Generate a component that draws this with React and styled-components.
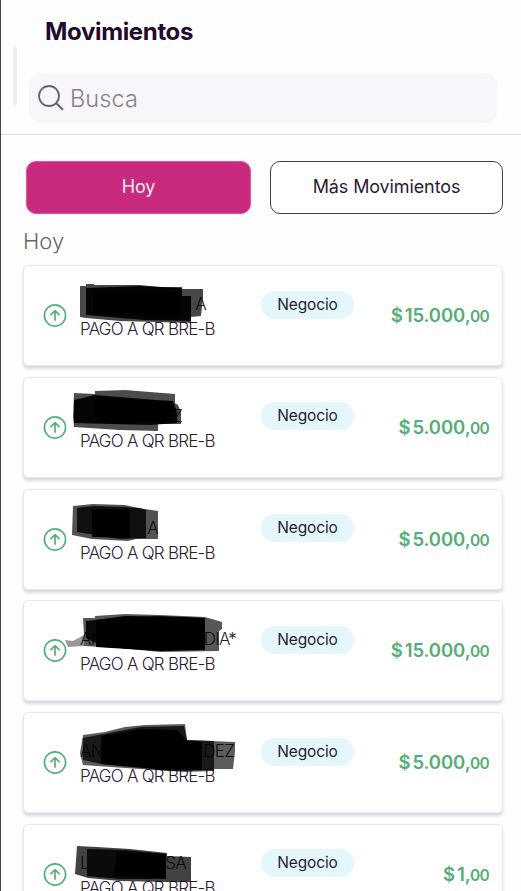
import React from "react"
import styled, { createGlobalStyle } from "styled-components"

const GlobalStyle = createGlobalStyle`
  * { box-sizing: border-box; }

  body {
    margin: 0;
    height: 891px;
    overflow: hidden;
    background-color: #fff;
    font-family: "Inter", "Liberation Sans", sans-serif;
    color: #2b1a33;
  }
`

const StyledPage = styled.div`
  position: relative;
  height: 891px;
  overflow: hidden;
  border-left: 1px solid #48464a;
  background-color: #fefefe;
`

const StyledEdgeMark = styled.span`
  position: absolute;
  left: -1px;
  top: 471px;
  width: 1px;
  height: 6px;
  background-color: #000;
`

const StyledThumb = styled.span`
  position: absolute;
  left: 12px;
  top: 47px;
  width: 4px;
  height: 58px;
  border-radius: 2px;
  background-color: #eeeeef;
`

const StyledHeader = styled.header`
  height: 135px;
  padding: 17px 24px 0 28px;
  border-bottom: 1px solid #e3e1e6;
`

const StyledTitle = styled.h1`
  margin: 0 0 27px 16px;
  font-size: 24px;
  line-height: 29px;
  font-weight: 650;
  letter-spacing: -0.35px;
  color: #240a2c;
`

const StyledSearch = styled.div`
  display: flex;
  align-items: center;
  gap: 5px;
  height: 50px;
  padding-left: 8px;
  border-radius: 12px;
  background-color: #f8f6fb;
  font-size: 23.5px;
  font-weight: 300;
  letter-spacing: 0.1px;
  color: #87818b;
`

const StyledTabs = styled.div`
  display: flex;
  gap: 19px;
  padding: 26px 18px 0 25px;
`

const StyledTab = styled.button`
  width: ${ ({ $selected }) => $selected ? "225px" : "233px" };
  height: 52.5px;
  padding: 0 0 1px;
  border: ${ ({ $selected }) => $selected ? "1px solid #d65b9c" : "1.5px solid #4a3b50" };
  border-radius: 10px;
  background-color: ${ ({ $selected }) => $selected ? "#c82a7e" : "#fff" };
  ${ ({ $selected }) => $selected && "box-shadow: 0 0 3px #e3dfe6;" }
  color: ${ ({ $selected }) => $selected ? "#fbeaf4" : "#2b1a33" };
  font-family: inherit;
  font-size: 18px;
  letter-spacing: -0.12px;
`

const StyledDay = styled.h2`
  margin: 13px 0 9.5px 22px;
  font-size: 22px;
  line-height: 29px;
  font-weight: 350;
  color: #69666b;
`

const StyledList = styled.div`
  display: grid;
  row-gap: 10.8px;
  padding: 0 18px 0 22px;
`

const StyledCard = styled.div`
  position: relative;
  display: grid;
  grid-template-columns: 56px 181px 93px 1fr;
  height: 101px;
  padding-right: 13px;
  border: 1px solid #e9e7ef;
  border-radius: 5px;
  background-color: #fff;
  box-shadow: 0 3px 3px #dcd8e0;
`

const StyledArrow = styled.svg`
  margin: 37px 0 0 19px;
`

const StyledDetail = styled.div`
  padding-top: 26px;
  font-size: 17px;
  line-height: 25px;
  font-weight: 300;
  letter-spacing: -0.75px;
  white-space: nowrap;
`

const StyledName = styled.div`
  display: flex;
  justify-content: space-between;
  width: ${ ({ width }) => width }px;
  height: 25px;
`

const StyledInk = styled.svg`
  position: absolute;
  left: 37px;
  top: 0;
  pointer-events: none;
`

const StyledBadge = styled.div`
  height: 28px;
  margin-top: 24.5px;
  border-radius: 14px;
  background-color: #e3f7fd;
  font-size: 15.5px;
  line-height: 27px;
  letter-spacing: -0.15px;
  text-align: center;
`

const StyledAmount = styled.div`
  padding-top: 37px;
  text-align: right;
  white-space: nowrap;
  font-size: 18.5px;
  line-height: 25px;
  font-weight: 600;
  letter-spacing: -0.1px;
  word-spacing: -2.6px;
  color: #55ae76;

  small {
    margin-left: -0.5px;
    font-size: 15.5px;
    letter-spacing: -0.7px;
  }
`

// ink points are relative to x = 60 of the page and the top of each card
const movements = [
  {
    start: "", end: "A", width: 126, amount: "15.000",
    ink: [
      { d: "M20 21L26 21V19H34V20H80L100 22H122V24H143V32L141 51L131 52V58L60 56L26 53L20 52Z", o: 0.72 },
      { d: "M26 23L80 21L122 23V31H131V56L85 55L26 50Z", o: 0.93 },
      { d: "M33 27L120 28V51L33 49Z", o: 1 }
    ]
  },
  {
    start: "", end: "Z", width: 102, amount: "5.000",
    ink: [
      { d: "M14 16L35 17V14L65 13L115 17V26L118 28L121 35V47H98V54L60 53L14 50L13 40Z", o: 0.7 },
      { d: "M14 23L35 18L96 23L113 24L117 35L117 46L90 48L14 46Z", o: 0.94 },
      { d: "M35 21L80 23L112 25V45L35 46Z", o: 1 }
    ]
  },
  {
    start: "", end: "A", width: 78, amount: "5.000",
    ink: [
      { d: "M13 17L33 15L65 16L78 19L98 22V50H76L68 52L32 50L12 46Z", o: 0.68 },
      { d: "M17 19L33 17L64 18L80 19L86 21V49L60 50L17 43Z", o: 0.8 },
      { d: "M32 20H70V49L32 48Z", o: 0.96 }
    ]
  },
  {
    start: "AN", end: "DIA*", width: 156, amount: "15.000",
    ink: [
      { d: "M23 18L35 18V16L65 14L100 15L145 17L162 22V29L159 31V51L100 52L60 48L24 46V35Z", o: 0.66 },
      { d: "M5 40L13 41L24 35V46L8 47Z", o: 0.4 },
      { d: "M26 21L65 17L100 16L145 18V49L100 51L60 48L36 43L26 38Z", o: 0.88 },
      { d: "M36 20L65 16L145 18V50L100 51L36 47Z", o: 1 }
    ]
  },
  {
    start: "AN", end: "DEZ", width: 154, amount: "5.000",
    ink: [
      { d: "M23 23L45 20L65 15L85 13L125 12L127 28L175 30V40L173 57H154V59L125 60L65 56L23 53L20 41Z", o: 0.64 },
      { d: "M23 26L80 15L124 14L127 28L154 29V58L110 59L41 52L23 48Z", o: 0.72 },
      { d: "M41 24L80 17L117 18L127 29L142 30V58L110 58L41 52Z", o: 0.97 }
    ]
  },
  {
    start: "L", end: "SA", width: 106, amount: "1",
    ink: [
      { d: "M17 22L37 23L70 25L107 29V32L131 33V58H106L60 57L28 54L15 50Z", o: 0.74 },
      { d: "M27 25L65 26L106 30V55L60 55L27 52Z", o: 0.83 },
      { d: "M57 28L106 30V54L53 53Z", o: 0.94 }
    ]
  }
]

const SearchIcon = () => (
  <svg width="28" height="28" viewBox="0 0 28 28" fill="none" stroke="#69646c" strokeWidth="1.8">
    <circle cx="12" cy="12" r="10" />
    <path d="M19 19L26 25.7" strokeWidth="2.1" />
  </svg>
)

const Movement = ({ movement }) => {
  const { start, end, width, amount, ink } = movement

  return (
    <StyledCard>
      <StyledArrow width="25" height="25" viewBox="0 0 25 25" fill="none" stroke="#55b078" strokeWidth="1.7">
        <circle cx="12" cy="12.5" r="10.6" />
        <path d="M12 17.7V7.8M7.4 12.2L12 7.6L16.6 12.2" />
      </StyledArrow>
      <StyledDetail>
        <StyledName width={ width }>
          <span>{ start }</span>
          <span>{ end }</span>
        </StyledName>
        PAGO A QR BRE-B
      </StyledDetail>
      <StyledBadge>Negocio</StyledBadge>
      <StyledAmount>
        $ { amount },<small>00</small>
      </StyledAmount>
      <StyledInk width="180" height="70" viewBox="1 1 180 70">
        {
          ink.map(({ d, o }, i) => (
            <path d={ d } fill="#000" fillOpacity={ o } key={ i } />
          ))
        }
      </StyledInk>
    </StyledCard>
  )
}

const App = () => (
  <>
    <GlobalStyle />
    <StyledPage>
      <StyledEdgeMark />
      <StyledThumb />
      <StyledHeader>
        <StyledTitle>Movimientos</StyledTitle>
        <StyledSearch>
          <SearchIcon />
          Busca
        </StyledSearch>
      </StyledHeader>
      <StyledTabs>
        <StyledTab $selected>Hoy</StyledTab>
        <StyledTab>Más Movimientos</StyledTab>
      </StyledTabs>
      <StyledDay>Hoy</StyledDay>
      <StyledList>
        {
          movements.map((movement, i) => (
            <Movement movement={ movement } key={ i } />
          ))
        }
      </StyledList>
    </StyledPage>
  </>
)

export default App
